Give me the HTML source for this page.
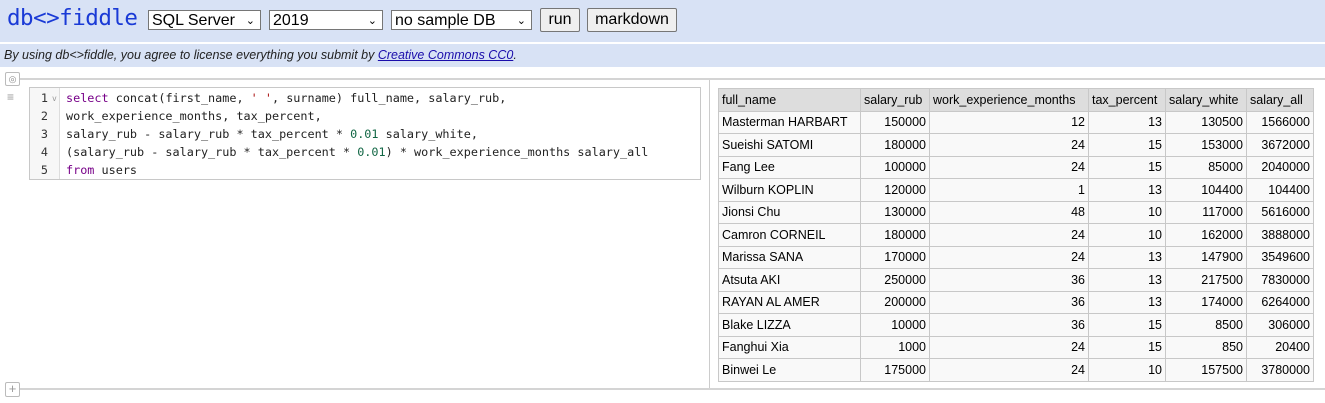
<!DOCTYPE html>
<html><head><style>
body{margin:0;width:1325px;height:403px;background:#fff;font-family:"Liberation Sans",sans-serif;position:relative;overflow:hidden}
.top{position:absolute;left:0;top:0;width:1325px;height:42px;background:#d8e2f5}
.logo{position:absolute;left:7px;top:5px;font-family:"DejaVu Sans Mono","Liberation Mono",monospace;font-size:22.5px;color:#1a3ad6;letter-spacing:-0.5px}
.sel{position:absolute;top:10px;height:20px;border:1px solid #767676;background:#fff;font-size:16px;line-height:20px;padding-left:3px;box-sizing:border-box;color:#000}
.sel span{position:absolute;right:5px;top:0;font-size:11px}
.btn{position:absolute;top:8px;height:24px;border:1px solid #767676;border-radius:2px;background:#efefef;font-size:16px;line-height:22px;text-align:center;box-sizing:border-box}
.note{position:absolute;left:0;top:44px;width:1325px;height:23px;background:#d8e2f5;font-size:12.5px;font-style:italic;line-height:23px;padding-left:4px;color:#222}
.note a{color:#1a0dab;text-decoration:underline}
.hl{position:absolute;background:#d4d4d4}
.ed{position:absolute;left:29px;top:87px;width:672px;height:93px;border:1px solid #c8c8c8;box-sizing:border-box;font-family:"DejaVu Sans Mono","Liberation Mono",monospace;font-size:11.8px}
.gut{position:absolute;left:0;top:0;height:91px;background:#f7f7f7;border-right:1px solid #ddd;width:29px}
.ln{position:absolute;left:0;width:18px;text-align:right;color:#333}
.cl{position:absolute;left:36px;white-space:pre;color:#222}
.kw{color:#708}.st{color:#a11}.nu{color:#164}
table{position:absolute;left:718px;top:88px;border-collapse:collapse;font-size:12.5px}
td,th{border:1px solid #c8c8c8;height:22.5px;padding:0 3px;white-space:nowrap;box-sizing:border-box}
th{background:#ddd;font-weight:normal;text-align:left}
td{background:#f9f9f9;text-align:right}
td:first-child{text-align:left}
</style></head><body>
<div class="top">
<div class="logo">db&lt;&gt;fiddle</div>
<div class="sel" style="left:148px;width:113px">SQL Server<span>&#8964;</span></div>
<div class="sel" style="left:269px;width:114px">2019<span>&#8964;</span></div>
<div class="sel" style="left:391px;width:141px">no sample DB<span>&#8964;</span></div>
<div class="btn" style="left:540px;width:40px">run</div>
<div class="btn" style="left:587px;width:90px">markdown</div>
</div>
<div class="note">By using db&lt;&gt;fiddle, you agree to license everything you submit by <a>Creative Commons CC0</a>.</div>
<div class="hl" style="left:16px;top:78px;width:1309px;height:2px"></div>
<div style="position:absolute;left:5px;top:72px;width:13px;height:12px;border:1px solid #bbb;border-radius:2px;background:#fff;font-size:9px;line-height:12px;text-align:center;color:#888">◎</div>
<div style="position:absolute;left:7px;top:90px;font-size:12px;color:#999">≡</div>
<div class="ed"><div class="gut"></div>
<div class="ln" style="top:3px">1</div><div style="position:absolute;left:22px;top:6px;font-size:8px;color:#999">v</div>
<div class="ln" style="top:21px">2</div><div class="ln" style="top:39px">3</div><div class="ln" style="top:57px">4</div><div class="ln" style="top:75px">5</div>
<div class="cl" style="top:3px"><span class="kw">select</span> concat(first_name, <span class="st">' '</span>, surname) full_name, salary_rub,</div>
<div class="cl" style="top:21px">work_experience_months, tax_percent,</div>
<div class="cl" style="top:39px">salary_rub - salary_rub * tax_percent * <span class="nu">0.01</span> salary_white,</div>
<div class="cl" style="top:57px">(salary_rub - salary_rub * tax_percent * <span class="nu">0.01</span>) * work_experience_months salary_all</div>
<div class="cl" style="top:75px"><span class="kw">from</span> users</div>
</div>
<div class="hl" style="left:709px;top:80px;width:1px;height:308px;background:#ccc"></div>
<table>
<tr><th style="width:142px">full_name</th><th style="width:69px">salary_rub</th><th style="width:159px">work_experience_months</th><th style="width:77px">tax_percent</th><th style="width:81px">salary_white</th><th style="width:67px">salary_all</th></tr>
<tr><td>Masterman HARBART</td><td>150000</td><td>12</td><td>13</td><td>130500</td><td>1566000</td></tr>
<tr><td>Sueishi SATOMI</td><td>180000</td><td>24</td><td>15</td><td>153000</td><td>3672000</td></tr>
<tr><td>Fang Lee</td><td>100000</td><td>24</td><td>15</td><td>85000</td><td>2040000</td></tr>
<tr><td>Wilburn KOPLIN</td><td>120000</td><td>1</td><td>13</td><td>104400</td><td>104400</td></tr>
<tr><td>Jionsi Chu</td><td>130000</td><td>48</td><td>10</td><td>117000</td><td>5616000</td></tr>
<tr><td>Camron CORNEIL</td><td>180000</td><td>24</td><td>10</td><td>162000</td><td>3888000</td></tr>
<tr><td>Marissa SANA</td><td>170000</td><td>24</td><td>13</td><td>147900</td><td>3549600</td></tr>
<tr><td>Atsuta AKI</td><td>250000</td><td>36</td><td>13</td><td>217500</td><td>7830000</td></tr>
<tr><td>RAYAN AL AMER</td><td>200000</td><td>36</td><td>13</td><td>174000</td><td>6264000</td></tr>
<tr><td>Blake LIZZA</td><td>10000</td><td>36</td><td>15</td><td>8500</td><td>306000</td></tr>
<tr><td>Fanghui Xia</td><td>1000</td><td>24</td><td>15</td><td>850</td><td>20400</td></tr>
<tr><td>Binwei Le</td><td>175000</td><td>24</td><td>10</td><td>157500</td><td>3780000</td></tr>
</table>
<div class="hl" style="left:16px;top:388px;width:1309px;height:2px"></div>
<div style="position:absolute;left:5px;top:382px;width:13px;height:13px;border:1px solid #bbb;border-radius:2px;background:#fff;font-size:13px;line-height:12px;text-align:center;color:#999">+</div>
</body></html>
